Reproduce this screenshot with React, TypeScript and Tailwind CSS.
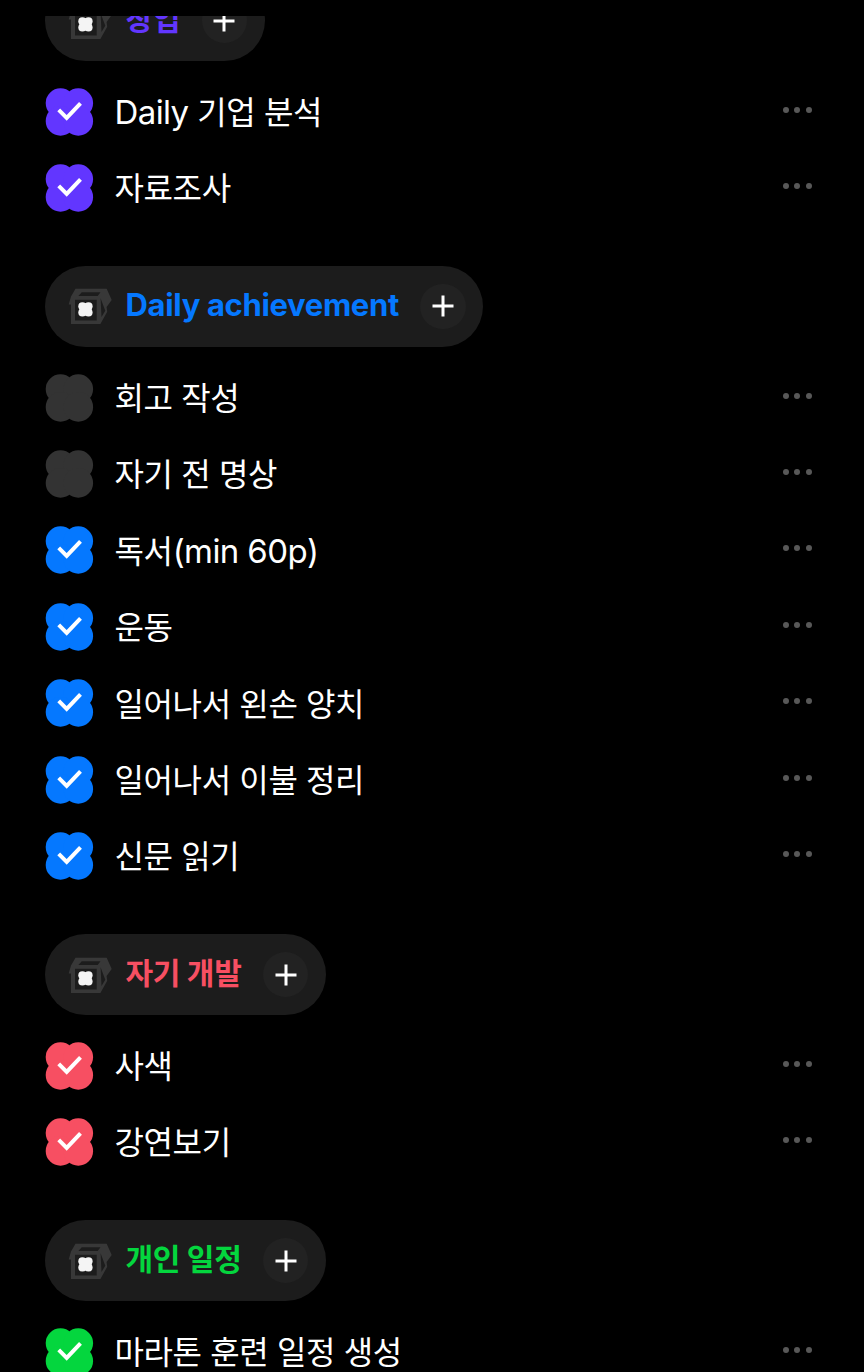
interface Todo {
  text: string;
  done: boolean;
}

interface Group {
  title: string;
  color: string;
  todos: Todo[];
}

const groups: Group[] = [
  {
    title: '창업',
    color: '#6236ff',
    todos: [
      { text: 'Daily 기업 분석', done: true },
      { text: '자료조사', done: true },
    ],
  },
  {
    title: 'Daily achievement',
    color: '#0578ff',
    todos: [
      { text: '회고 작성', done: false },
      { text: '자기 전 명상', done: false },
      { text: '독서(min 60p)', done: true },
      { text: '운동', done: true },
      { text: '일어나서 왼손 양치', done: true },
      { text: '일어나서 이불 정리', done: true },
      { text: '신문 읽기', done: true },
    ],
  },
  {
    title: '자기 개발',
    color: '#f74f62',
    todos: [
      { text: '사색', done: true },
      { text: '강연보기', done: true },
    ],
  },
  {
    title: '개인 일정',
    color: '#04d63e',
    todos: [{ text: '마라톤 훈련 일정 생성', done: true }],
  },
];

// Hangul runs are set slightly smaller than Latin ones
function MixedText({ children, latin }: { children: string; latin: string }) {
  const runs = children.match(/[가-힣 ]+|[^가-힣]+/g) ?? [];
  return (
    <>
      {runs.map((run, i) => (
        <span key={i} className={/[가-힣]/.test(run) ? 'text-[0.97em] tracking-[-0.012em]' : latin}>
          {run}
        </span>
      ))}
    </>
  );
}

function Clover({ color, done }: { color: string; done: boolean }) {
  return (
    <svg viewBox="0 0 48 48" className="size-12 shrink-0 overflow-visible">
      <g fill={done ? color : '#333333'}>
        <circle cx="15.5" cy="15.1" r="14.8" />
        <circle cx="33.3" cy="15.1" r="14.8" />
        <circle cx="15.5" cy="32.9" r="14.8" />
        <circle cx="33.3" cy="32.9" r="14.8" />
      </g>
      {done && <path d="M13.7 21.8 21.7 29.8 35.5 15.4" fill="none" stroke="#fff" strokeWidth="4" />}
    </svg>
  );
}

function BoxIcon() {
  return (
    <svg viewBox="0 0 44 36" className="-ml-px h-9 w-11 shrink-0">
      <path
        fill="#383838"
        fillRule="evenodd"
        d="M7.5 .8H38.7L43.7 12 38.6 19 39.2 23.8 32.4 36H3V16.5H.7L3 8.6ZM10.3 7.9H29.7L32.5 4.2H13.8ZM7 11.8V32.4H28.7V11.8ZM32.6 10.2 33.5 29 37.3 22.8Z"
      />
      <g fill="#f4f4f4">
        <rect x="11.6" y="15.3" width="12" height="12.2" rx="2" />
        <circle cx="14.4" cy="18.3" r="4.1" />
        <circle cx="20.5" cy="18.3" r="4.1" />
        <circle cx="14.4" cy="24.5" r="4.1" />
        <circle cx="20.5" cy="24.5" r="4.1" />
      </g>
    </svg>
  );
}

function GroupHeader({ title, color }: { title: string; color: string }) {
  return (
    <div className="flex h-[81px] w-fit items-center rounded-full bg-[#1c1c1c] pr-[17.5px] pl-6">
      <BoxIcon />
      <h2 className="mb-[3px] ml-[13.5px] text-[31px] leading-10 font-bold whitespace-nowrap" style={{ color }}>
        <MixedText latin="tracking-[-0.011em]">{title}</MixedText>
      </h2>
      <button className="ml-[21.5px] flex size-[45.5px] items-center justify-center rounded-full bg-[#222222]">
        <svg viewBox="0 0 22 22" className="size-[22px]">
          <path d="M11 .5V21.5M.5 11H21.5" stroke="#fff" strokeWidth="3" />
        </svg>
      </button>
    </div>
  );
}

function TodoRow({ todo, color }: { todo: Todo; color: string }) {
  return (
    <li className="flex h-[76.44px] items-center">
      <Clover color={color} done={todo.done} />
      <span className="mt-[1.5px] ml-[21.5px] flex-1 text-[33px] leading-10 whitespace-nowrap text-white">
        <MixedText latin="tracking-[-0.018em]">{todo.text}</MixedText>
      </span>
      <button className="mb-1 flex gap-[5.7px]">
        <span className="size-1.5 rounded-full bg-[#585858]" />
        <span className="size-1.5 rounded-full bg-[#585858]" />
        <span className="size-1.5 rounded-full bg-[#585858]" />
      </button>
    </li>
  );
}

export default function App() {
  return (
    <div className="h-[1372px] overflow-hidden bg-black pt-4 font-['Inter','Noto_Sans_CJK_KR',sans-serif]">
      <div className="h-[1356px] overflow-hidden">
        <main className="-mt-[36px] flex flex-col gap-[39.7px] pr-[52px] pl-[45px]">
          {groups.map((group) => (
            <section key={group.title}>
              <GroupHeader title={group.title} color={group.color} />
              <ul className="mt-[12.4px]">
                {group.todos.map((todo) => (
                  <TodoRow key={todo.text} todo={todo} color={group.color} />
                ))}
              </ul>
            </section>
          ))}
        </main>
      </div>
    </div>
  );
}
